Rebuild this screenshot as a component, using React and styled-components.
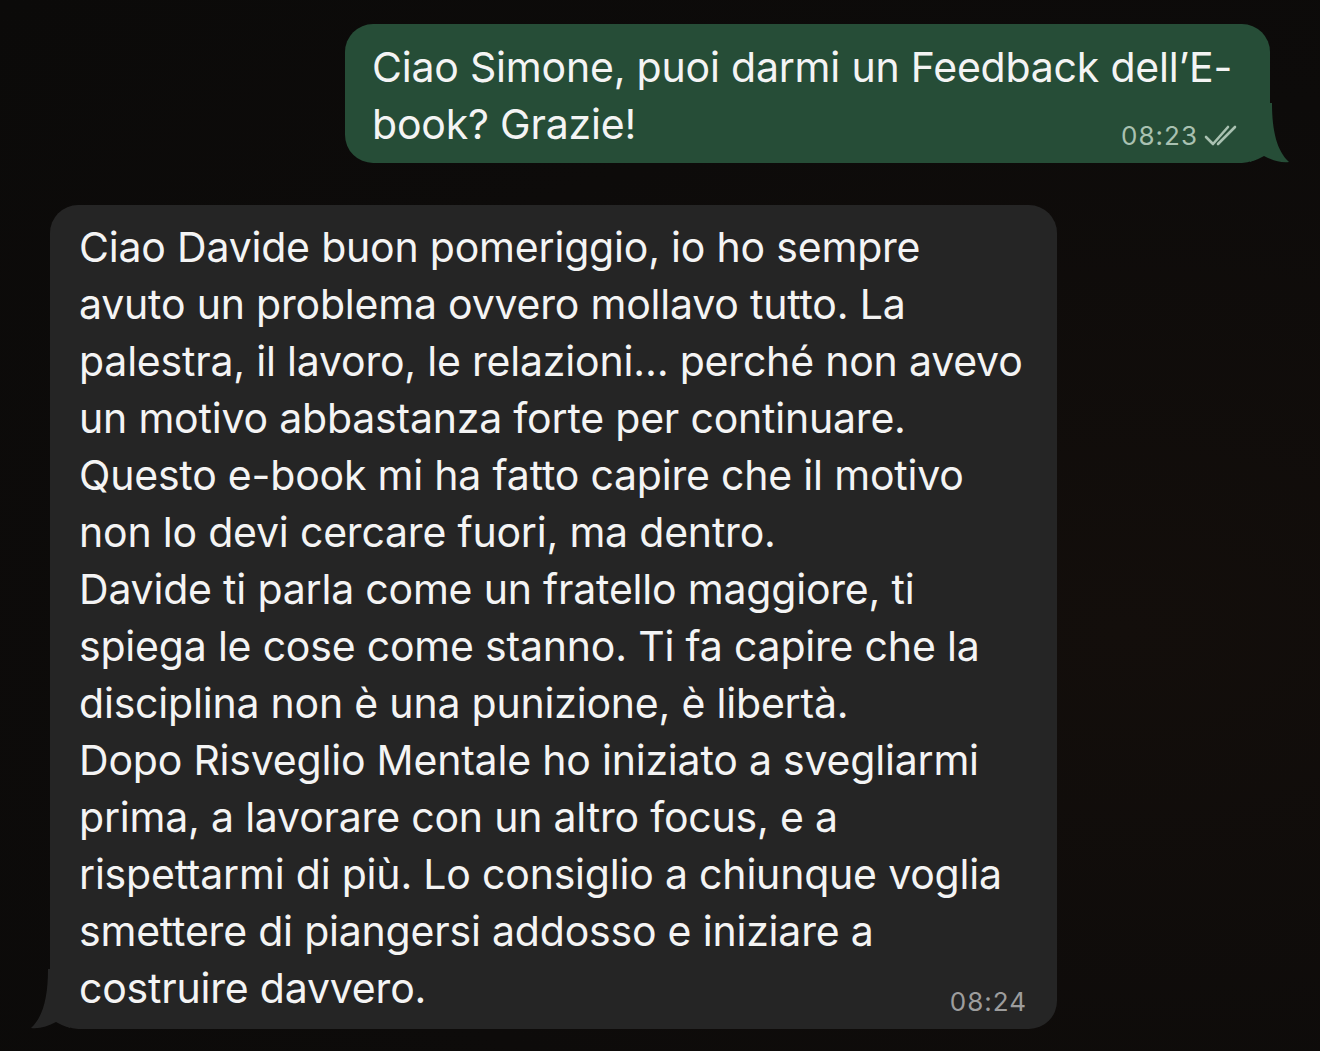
import React from "react";
import styled, { createGlobalStyle } from "styled-components";

const GlobalStyle = createGlobalStyle`
  html, body {
    margin: 0;
    padding: 0;
    background: #0e0b0a;
  }
  body {
    font-family: Inter, "Noto Sans", "Liberation Sans", sans-serif;
    -webkit-font-smoothing: antialiased;
  }
`;

const Chat = styled.div`
  width: 1320px;
  height: 1051px;
  box-sizing: border-box;
  padding: 24px 0 0;
  display: flex;
  flex-direction: column;
  gap: 42px;
  background: radial-gradient(ellipse at 85% 60%, #130e0b 0%, #0d0b0a 60%, #0b0a09 100%);
  overflow: hidden;
`;

const Row = styled.div`
  display: flex;
  justify-content: ${p => (p.$out ? "flex-end" : "flex-start")};
  padding: ${p => (p.$out ? "0 50px 0 0" : "0 0 0 50px")};
`;

const Bubble = styled.div`
  position: relative;
  box-sizing: border-box;
  width: ${p => p.$width}px;
  background: ${p => (p.$out ? "#264d37" : "#252525")};
  color: #f4f4f4;
  border-radius: 28px;
  padding: ${p => (p.$out ? "15px 28px 10px 27px" : "14px 30px 12px 29px")};
  font-size: 41px;
  line-height: 57px;
  letter-spacing: -0.2px;
`;

const Line = styled.div`
  white-space: nowrap;
`;

const LastLine = styled.div`
  display: flex;
  justify-content: space-between;
  align-items: flex-end;
  white-space: nowrap;
`;

const Meta = styled.span`
  display: inline-flex;
  align-items: center;
  gap: 6px;
  font-size: 26px;
  line-height: 30px;
  letter-spacing: 1px;
  color: ${p => (p.$out ? "#a9c1b1" : "#9d9d9d")};
  margin-bottom: ${p => (p.$out ? "2px" : "0px")};
  margin-right: ${p => (p.$out ? "2px" : "0")};
`;

const Tail = styled.svg`
  position: absolute;
  bottom: 0;
  ${p => (p.$out ? "right: -22px;" : "left: -22px;")}
`;

const Ticks = () => (
  <svg width="36" height="24" viewBox="0 0 36 24" fill="none">
    <path d="M2 13 L9 20 L24 3" stroke="#a9c1b1" strokeWidth="2.6" strokeLinecap="round" strokeLinejoin="round" />
    <path d="M14 20 L31 3" stroke="#a9c1b1" strokeWidth="2.6" strokeLinecap="round" />
  </svg>
);

const OutTail = () => (
  <Tail $out width="42" height="60" viewBox="0 0 42 60">
    <path
      d="M0 0 L22 0 C22 28 27 48 39 59 C30 60 22 57 14 53 C9 56 3 58 0 59 Z"
      fill="#264d37"
    />
  </Tail>
);

const InTail = () => (
  <Tail width="42" height="60" viewBox="0 0 42 60">
    <path
      d="M42 0 L20 0 C20 28 15 48 3 59 C12 60 20 57 28 53 C33 56 39 58 42 59 Z"
      fill="#252525"
    />
  </Tail>
);

const received = [
  "Ciao Davide buon pomeriggio, io ho sempre",
  "avuto un problema ovvero mollavo tutto. La",
  "palestra, il lavoro, le relazioni… perché non avevo",
  "un motivo abbastanza forte per continuare.",
  "Questo e-book mi ha fatto capire che il motivo",
  "non lo devi cercare fuori, ma dentro.",
  "Davide ti parla come un fratello maggiore, ti",
  "spiega le cose come stanno. Ti fa capire che la",
  "disciplina non è una punizione, è libertà.",
  "Dopo Risveglio Mentale ho iniziato a svegliarmi",
  "prima, a lavorare con un altro focus, e a",
  "rispettarmi di più. Lo consiglio a chiunque voglia",
  "smettere di piangersi addosso e iniziare a",
];

export default function App() {
  return (
    <>
      <GlobalStyle />
      <Chat>
        <Row $out>
          <Bubble $out $width={925}>
            <Line>Ciao Simone, puoi darmi un Feedback dell’E-</Line>
            <LastLine>
              <span>book? Grazie!</span>
              <Meta $out>
                08:23
                <Ticks />
              </Meta>
            </LastLine>
            <OutTail />
          </Bubble>
        </Row>
        <Row>
          <Bubble $width={1007}>
            {received.map(l => (
              <Line key={l}>{l}</Line>
            ))}
            <LastLine>
              <span>costruire davvero.</span>
              <Meta>08:24</Meta>
            </LastLine>
            <InTail />
          </Bubble>
        </Row>
      </Chat>
    </>
  );
}
